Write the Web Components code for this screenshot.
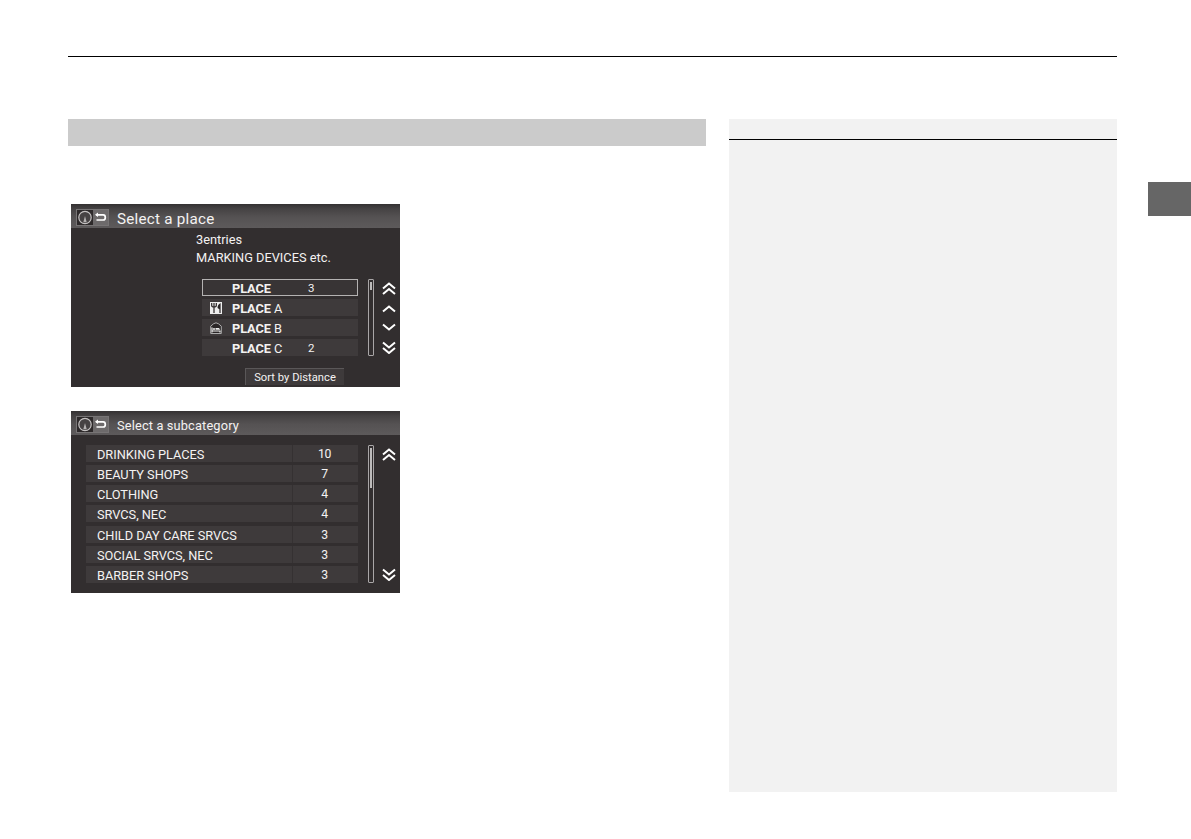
<!DOCTYPE html>
<html lang="en">
<head>
<meta charset="utf-8">
<title>Select a place</title>
<style>
  body { margin: 0; background: #fff; }
</style>
</head>
<body>
<manual-page>
  <nav-screen title="Select a place" size="15.2" spacing="0.25">
    <nav-info>
      <span>3entries</span>
      <span>MARKING DEVICES etc.</span>
    </nav-info>
    <nav-list class="places">
      <nav-row kind="place" selected count="3"><b>PLACE</b></nav-row>
      <nav-row kind="place" icon="food"><b>PLACE</b> A</nav-row>
      <nav-row kind="place" icon="hotel"><b>PLACE</b> B</nav-row>
      <nav-row kind="place" count="2"><b>PLACE</b> C</nav-row>
      <nav-scroll slot="scroll" thumb="8" buttons="up2 up down down2"></nav-scroll>
    </nav-list>
    <nav-button>Sort by Distance</nav-button>
  </nav-screen>
  <nav-screen title="Select a subcategory" size="12.8" spacing="0.15">
    <nav-list class="categories">
      <nav-row count="10">DRINKING PLACES</nav-row>
      <nav-row count="7">BEAUTY SHOPS</nav-row>
      <nav-row count="4">CLOTHING</nav-row>
      <nav-row count="4">SRVCS, NEC</nav-row>
      <nav-row count="3">CHILD DAY CARE SRVCS</nav-row>
      <nav-row count="3">SOCIAL SRVCS, NEC</nav-row>
      <nav-row count="3">BARBER SHOPS</nav-row>
      <nav-scroll slot="scroll" thumb="40" buttons="up2 down2"></nav-scroll>
    </nav-list>
  </nav-screen>
</manual-page>

<script>
// Attach an open shadow root holding the given markup
function render(el, html) {
  el.attachShadow({ mode: 'open' }).innerHTML = html;
}

class ManualPage extends HTMLElement {
  connectedCallback() {
    render(this, `
      <style>
        :host { display: flex; box-sizing: border-box; width: 1191px; height: 839px; padding-left: 68px; overflow: hidden; }
        .sheet { width: 1049px; padding-top: 56px; }
        .rule { height: 1px; background: #000; }
        .columns { display: flex; gap: 23px; margin-top: 62px; }
        .main { width: 638px; }
        .heading { height: 27px; background: #cbcbcb; }
        .screens { display: flex; flex-direction: column; gap: 24px; padding: 58px 0 0 3px; }
        .notes { display: flow-root; width: 388px; height: 673px; background: #f2f2f2; }
        .notes .rule { margin-top: 20px; }
        .tab { width: 43px; height: 34px; margin: 182px 0 0 31px; background: #666; }
      </style>
      <div class="sheet">
        <div class="rule"></div>
        <div class="columns">
          <div class="main">
            <div class="heading"></div>
            <div class="screens"><slot></slot></div>
          </div>
          <div class="notes"><div class="rule"></div></div>
        </div>
      </div>
      <div class="tab"></div>
    `);
  }
}

class NavScreen extends HTMLElement {
  connectedCallback() {
    const title = this.getAttribute('title');
    this.removeAttribute('title');
    render(this, `
      <style>
        :host {
          display: flex;
          flex-direction: column;
          width: 329px;
          height: 183px;
          background: #322e2f;
          color: #f4f2f2;
          font-family: Roboto, "Liberation Sans", sans-serif;
        }
        :host(:last-of-type) { height: 182px; }
        header {
          display: flex;
          align-items: center;
          flex: none;
          height: 24px;
          padding-top: 1px;
          box-sizing: border-box;
          background: linear-gradient(#343132, #454243 20%, #555253 55%, #5d5a5b);
        }
        svg { margin: 2px 0 0 5px; }
        h1 {
          margin: 4px 0 0 8px;
          font-size: ${this.getAttribute('size')}px;
          line-height: 20px;
          letter-spacing: ${this.getAttribute('spacing')}px;
          font-weight: 400;
        }
      </style>
      <header>
        <svg width="33" height="17" viewBox="0 0 33 17">
          <rect x=".5" y=".5" width="32" height="16" fill="#2d292a" stroke="#777475"/>
          <rect x="17" y="1" width="15" height="15" fill="#6d6a6b"/>
          <circle cx="9" cy="8.5" r="6.2" fill="#464243" stroke="#c5c2c2" stroke-width="1.2"/>
          <path d="M7.300 13.200 9 7l1.700 6.200z" fill="#b5b2b2"/>
          <path d="M20 5.800h7.200q2.100 0 2.100 2.600t-2.100 2.600H20.500" fill="none" stroke="#fff" stroke-width="1.700"/>
          <path d="M19 5.800 22 3.600v4.400z" fill="#fff"/>
        </svg>
        <h1>${title}</h1>
      </header>
      <slot></slot>
    `);
  }
}

class NavInfo extends HTMLElement {
  connectedCallback() {
    render(this, `
      <style>
        :host {
          display: flex;
          flex-direction: column;
          height: 36px;
          padding: 3px 0 0 125px;
          font-size: 12.8px;
          line-height: 18px;
        }
      </style>
      <slot></slot>
    `);
  }
}

class NavList extends HTMLElement {
  connectedCallback() {
    render(this, `
      <style>
        :host { display: flex; gap: 10px; }
        :host(.places) { height: 77px; margin: 12px 0 0 131px; --list-width: 156px; }
        :host(.categories) { height: 138px; margin: 10px 0 0 15px; --list-width: 272px; }
        .rows { display: flex; flex-direction: column; justify-content: space-between; width: var(--list-width); }
      </style>
      <div class="rows"><slot></slot></div>
      <slot name="scroll"></slot>
    `);
  }
}

const rowIcons = {
  food: `
    <rect width="12" height="12" fill="#eee"/>
    <path d="M1.700 1v2.500q0 1.500 2.300 1.500t2.300-1.500V1M4 1v10" fill="none" stroke="#2a2627" stroke-width="1.200"/>
    <path d="M10.600 1v10H9.400V7.200L7.500 6q0-3.500 3.100-5z" fill="#2a2627"/>`,
  hotel: `
    <path d="M.7 11.500V4.200L3.500 1.800 6 .8l2.500 1 2.800 2.400v7.300z" fill="#2a2627" stroke="#bbb" stroke-width=".9"/>
    <path d="M2 5.500v5M2 9h8v1.500" fill="none" stroke="#eee" stroke-width="1.200"/>
    <path d="M3 6.200h2v1.600H3zM5.500 6h3.500l1.200 1.800H5.500z" fill="#eee"/>`
};

class NavRow extends HTMLElement {
  connectedCallback() {
    const icon = rowIcons[this.getAttribute('icon')] || '';
    const place = this.getAttribute('kind') === 'place';
    render(this, `
      <style>
        :host {
          display: flex;
          align-items: center;
          box-sizing: border-box;
          height: 17px;
          background: #3e3a3b;
          font-size: 12.8px;
          line-height: 19px;
          white-space: pre;
        }
        :host([selected]) { box-shadow: inset 0 0 0 1px #b4b2b2; background: #383435; }
        .icon { display: flex; width: 22px; padding: 1px 0 0 8px; }
        .label { flex: 1; height: 17px; padding-left: 11px; letter-spacing: -0.04px; }
        .place { flex: none; width: 74px; padding-left: 0; letter-spacing: -0.1px; }
        .count {
          box-sizing: border-box;
          width: 66px;
          height: 17px;
          border-left: 1px solid #353132;
          padding-right: 2px;
          text-align: center;
          font-size: 12.2px;
          letter-spacing: -0.3px;
        }
        .place + .count { width: 10px; border: 0; padding: 0; font-size: 11.5px; }
      </style>
      ${place ? `<span class="icon"><svg width="12" height="12" viewBox="0 0 12 12">${icon}</svg></span>` : ''}
      <span class="label ${place ? 'place' : ''}"><slot></slot></span>
      <span class="count">${this.getAttribute('count') || ''}</span>
    `);
  }
}

const chevrons = {
  up: 'M1 6.500 7 1.500l6 5',
  down: 'M1 1.500l6 5 6-5',
  up2: 'M1 6.500 7 1.500l6 5M1 12 7 7l6 5',
  down2: 'M1 1.500l6 5 6-5M1 7l6 5 6-5'
};

class NavScroll extends HTMLElement {
  connectedCallback() {
    const arrows = this.getAttribute('buttons').split(' ').map(name => {
      const h = name.endsWith('2') ? 13 : 8;
      return `<svg width="14" height="${h}" viewBox="0 0 14 ${h}"><path d="${chevrons[name]}"/></svg>`;
    }).join('');
    render(this, `
      <style>
        :host { display: flex; gap: 8px; }
        .track { box-sizing: border-box; width: 6px; border: 1px solid #a9a6a7; border-radius: 1px; padding: 2px 1px; }
        .thumb { height: ${this.getAttribute('thumb')}px; background: #bdbbbb; }
        .arrows { display: flex; flex-direction: column; justify-content: space-between; padding: 3px 0 2px; }
        path { fill: none; stroke: #fff; stroke-width: 2; }
      </style>
      <div class="track"><div class="thumb"></div></div>
      <div class="arrows">${arrows}</div>
    `);
  }
}

class NavButton extends HTMLElement {
  connectedCallback() {
    render(this, `
      <style>
        :host {
          display: block;
          box-sizing: border-box;
          width: 99px;
          height: 17px;
          margin: 12px 0 0 174px;
          border-top: 1px solid #5a5758;
          border-left: 1px solid #5a5758;
          background: #3e3a3b;
          text-align: center;
          font-size: 11.2px;
          line-height: 17px;
          letter-spacing: 0.02px;
        }
      </style>
      <slot></slot>
    `);
  }
}

customElements.define('manual-page', ManualPage);
customElements.define('nav-screen', NavScreen);
customElements.define('nav-info', NavInfo);
customElements.define('nav-list', NavList);
customElements.define('nav-row', NavRow);
customElements.define('nav-scroll', NavScroll);
customElements.define('nav-button', NavButton);
</script>
</body>
</html>
